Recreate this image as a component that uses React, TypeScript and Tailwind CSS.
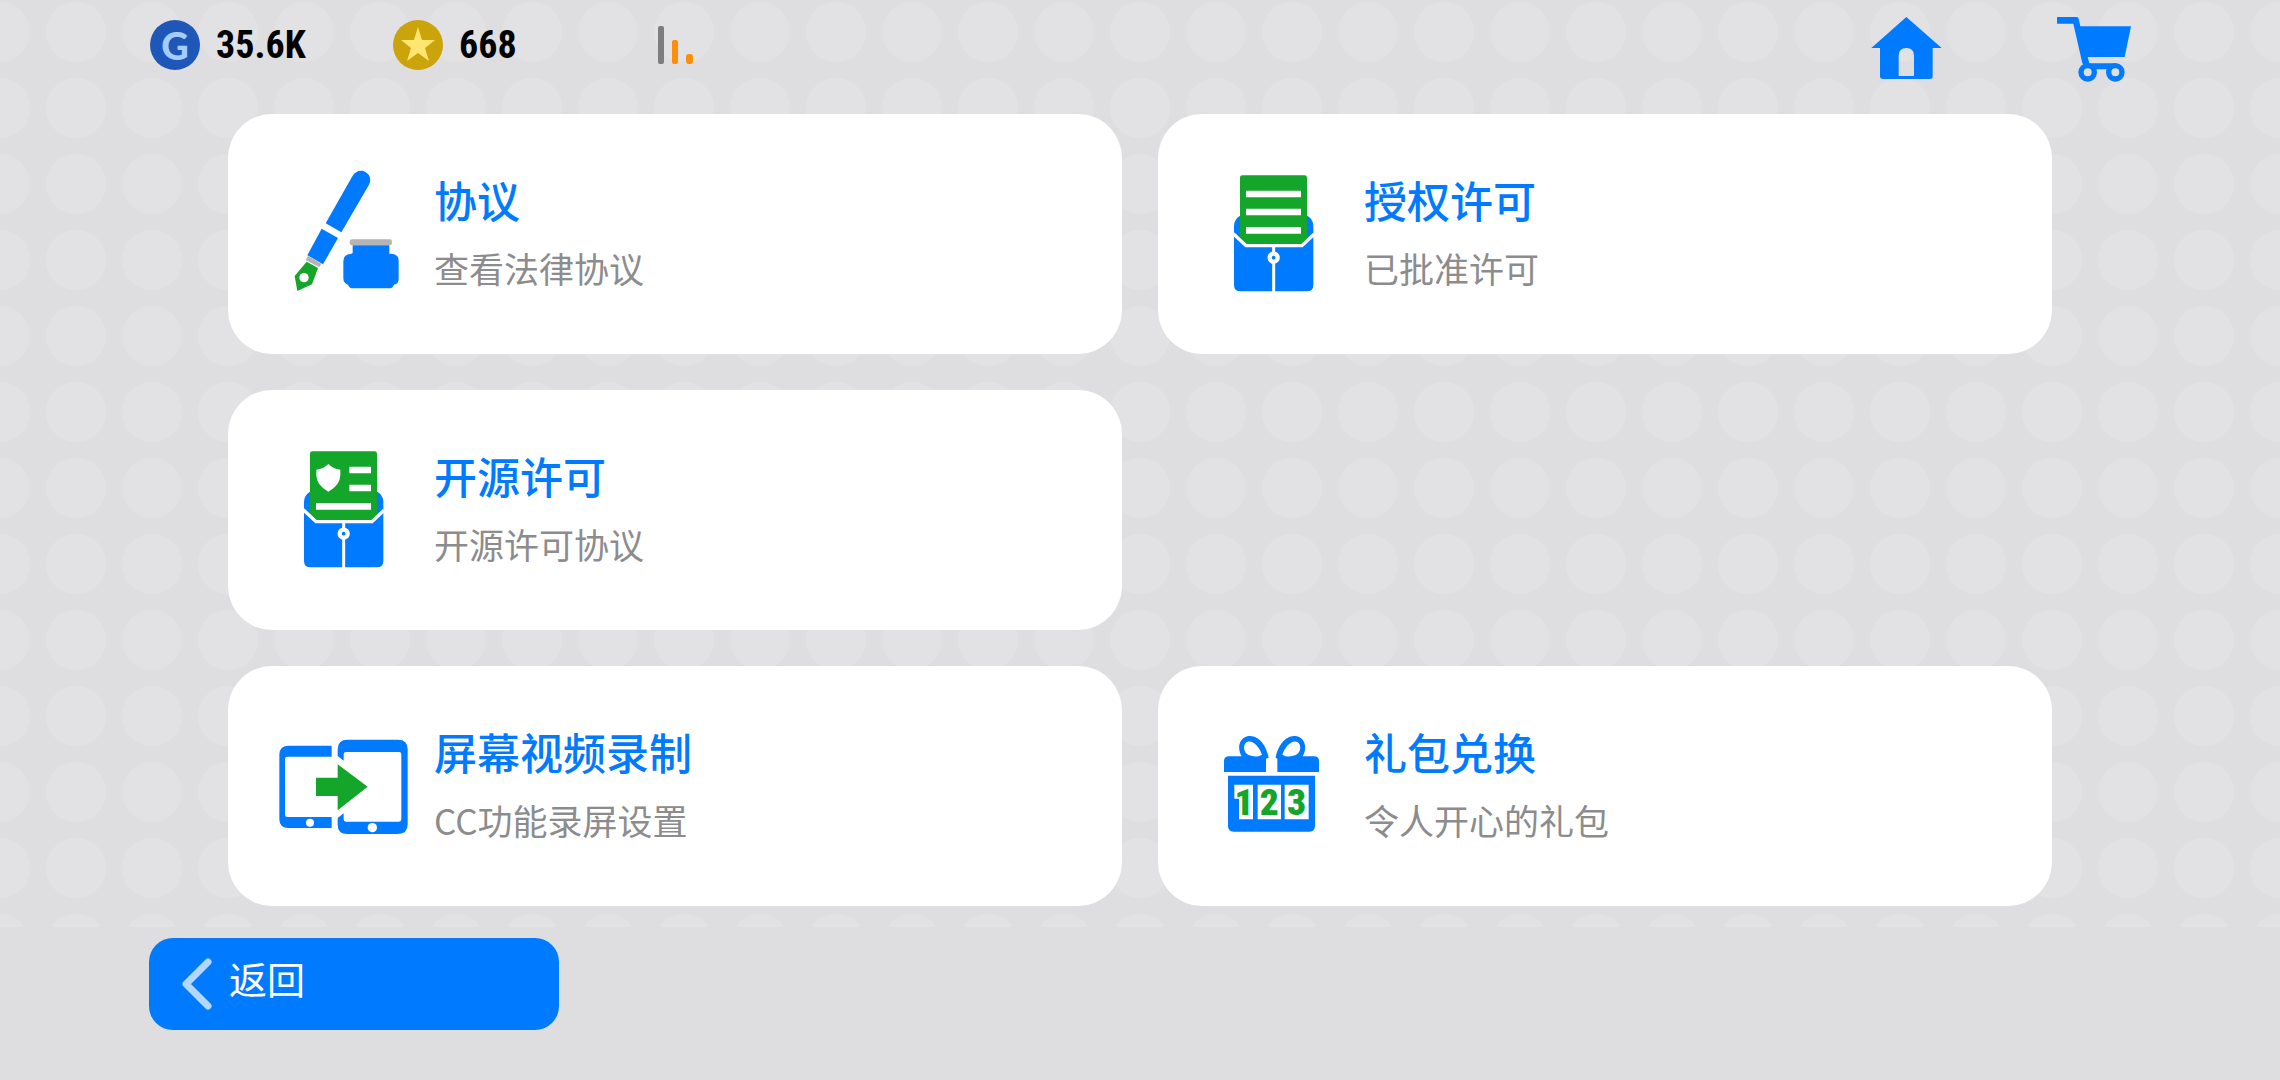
import type { ReactNode } from "react";

const BLUE = "#007bff";
const GREEN = "#14a52b";

function PenIcon() {
  return (
    <svg viewBox="156 156 432 432" className="size-36 shrink-0" aria-hidden="true">
      <path d="M317 340 L397 199 C404 186 417 180 430 183 C448 189 456 206 447 224 L364 367 Z" fill={BLUE} />
      <path d="M305 356 L354 384 L309 463 L262 436 Z" fill={BLUE} />
      <path d="M264 438 L304 461 L298 472 L257 450 Z" fill="#b5b5b5" />
      <path d="M260 455 L294 474 L276 523 L232 543 L224 498 Z" fill={GREEN} />
      <circle cx="252" cy="503" r="14" fill="#fff" />
      <rect x="389" y="388" width="127" height="18" rx="7" fill="#b5b5b5" />
      <path d="M398 406 H508 V431 H514 Q536 433 536 452 V507 Q536 522 522 524 Q518 535 508 535 H398 Q388 535 384 524 Q370 520 370 505 V454 Q370 433 392 432 L398 429 Z" fill={BLUE} />
    </svg>
  );
}

function EnvelopeIcon({ children }: { children: ReactNode }) {
  return (
    <svg viewBox="156 156 432 432" className="size-36 shrink-0" aria-hidden="true">
      <path d="M270 317 Q252 328 252 348 V524 Q252 544 272 544 H470 Q490 544 490 524 V348 Q490 328 472 317 Z" fill={BLUE} />
      <path d="M278 196 H464 Q471 196 471 203 V388 L456 404 H288 L270 387 V203 Q270 196 278 196 Z" fill={GREEN} />
      <path d="M250 371 L288 407 H456 L492 373" fill="none" stroke="#fff" strokeWidth="10" />
      <path d="M371 407 V546" stroke="#fff" strokeWidth="9" />
      <circle cx="371" cy="443" r="12" fill={BLUE} stroke="#fff" strokeWidth="13" />
      {children}
    </svg>
  );
}

function LicenseIcon() {
  return (
    <EnvelopeIcon>
      <path d="M288 252 H453 M288 306 H453 M288 361 H453" stroke="#fff" strokeWidth="20" />
    </EnvelopeIcon>
  );
}

function OpenSourceIcon() {
  return (
    <EnvelopeIcon>
      <path d="M325 234 Q340 249 361 251 V268 Q360 299 325 317 Q290 299 289 268 V251 Q310 249 325 234 Z" fill="#fff" />
      <path d="M388 252 H453 M388 306 H453 M288 361 H453" stroke="#fff" strokeWidth="20" />
    </EnvelopeIcon>
  );
}

function RecordIcon() {
  return (
    <svg viewBox="156 162 432 432" className="size-36 shrink-0" aria-hidden="true">
      <path d="M335 257 H206 Q178 257 178 284 V478 Q178 504 206 504 H335 V471 H202 Q195 471 195 464 V297 Q195 290 202 290 H335 Z" fill={BLUE} />
      <circle cx="270" cy="488" r="12" fill="#fff" />
      <path d="M371 302 L353 288 V268 Q353 239 382 239 H534 Q563 239 563 268 V493 Q563 522 534 522 H382 Q353 522 353 494 V474 L371 460 V478 Q371 485 378 485 H537 Q544 485 544 478 V283 Q544 276 537 276 H378 Q371 276 371 283 Z" fill={BLUE} />
      <circle cx="457" cy="503" r="14" fill="#fff" />
      <path d="M288 353 H353 V313 L443 380 L353 451 V408 H288 Z" fill={GREEN} />
    </svg>
  );
}

function GiftIcon() {
  return (
    <svg viewBox="156 162 432 432" className="size-36 shrink-0" aria-hidden="true">
      <path
        fillRule="evenodd"
        fill={BLUE}
        d="M222 336 V303 Q222 289 237 289 H275 C263 270 263 238 292 229 C325 222 350 258 356 293 L348 296 V336 Z M298 286 C279 279 277 250 293 245 C311 240 330 264 336 284 C325 291 310 291 298 286 Z"
      />
      <path
        fillRule="evenodd"
        fill={BLUE}
        d="M507 336 V303 Q507 289 492 289 H458 C470 270 470 238 441 229 C408 222 383 258 377 293 L382 296 V336 Z M435 286 C454 279 456 250 440 245 C422 240 403 264 397 284 C408 291 423 291 435 286 Z"
      />
      <path d="M234 347 H495 V498 Q495 515 478 515 H251 Q234 515 234 498 Z" fill={BLUE} />
      <path d="M253 374 H309 V478 H267 V416 H253 Z M323 374 H393 V478 H323 Z M404 374 H476 V478 H404 Z" fill="#fff" />
      <g
        fill={GREEN}
        textAnchor="middle"
        fontSize="112"
        fontWeight="900"
        fontFamily="'Roboto Condensed', Roboto, sans-serif"
      >
        <text x="282" y="466">1</text>
        <text x="358" y="466">2</text>
        <text x="440" y="466">3</text>
      </g>
    </svg>
  );
}

function HomeIcon() {
  return (
    <svg viewBox="93 48 213 192" className="h-16 w-[71px]" aria-hidden="true">
      <path
        fillRule="evenodd"
        fill={BLUE}
        d="M199 51 L305 144 H278 V229 Q278 237 269 237 H129 Q120 237 120 229 V144 H94 Z M176 228 H222 V167 Q222 144 199 144 Q176 144 176 167 Z"
      />
    </svg>
  );
}

function CartIcon() {
  return (
    <svg viewBox="648 48 228 201" className="h-[67px] w-[76px]" aria-hidden="true">
      <path d="M651 51 H710 Q715 51 716 56 L721 79 H873 L854 171 H743 L748 190 H826 V208 H744 L727 190 L700 71 H651 Z" fill={BLUE} />
      <circle cx="743" cy="217" r="20" fill="#dfdfe1" stroke={BLUE} strokeWidth="16" />
      <circle cx="826" cy="217" r="20" fill="#dfdfe1" stroke={BLUE} strokeWidth="16" />
    </svg>
  );
}

function StarBadge() {
  return (
    <svg viewBox="0 0 50 50" className="size-[50px]" aria-hidden="true">
      <circle cx="25" cy="25" r="25" fill="#cba30b" />
      <path d="M25 7 L29 20 H42 L32 28 L36 41 L25 33 L14 41 L18 28 L8 20 H21 Z" fill="#ffe670" />
    </svg>
  );
}

function SignalIcon() {
  return (
    <svg viewBox="0 0 36 38" className="h-[38px] w-9" role="img" aria-label="信号">
      <rect x="0" y="0" width="6" height="38" rx="2" fill="#7d7d7d" />
      <rect x="14" y="14" width="6" height="24" rx="2" fill="#ff8c0a" />
      <rect x="28" y="28" width="7" height="10" rx="3" fill="#ff8c0a" />
    </svg>
  );
}

type Entry = { title: string; note: string; icon: ReactNode; place?: string };

const entries: Entry[] = [
  { title: "协议", note: "查看法律协议", icon: <PenIcon /> },
  { title: "授权许可", note: "已批准许可", icon: <LicenseIcon /> },
  { title: "开源许可", note: "开源许可协议", icon: <OpenSourceIcon /> },
  { title: "屏幕视频录制", note: "CC功能录屏设置", icon: <RecordIcon />, place: "col-start-1" },
  { title: "礼包兑换", note: "令人开心的礼包", icon: <GiftIcon /> },
];

function Card({ title, note, icon, place = "" }: Entry) {
  return (
    <button type="button" className={`flex items-center gap-[18px] rounded-[44px] bg-white py-12 pl-11 pr-6 text-left ${place}`}>
      {icon}
      <span className="flex flex-col">
        <span className="text-[43px] font-medium leading-[68px] text-[#007bff]">{title}</span>
        <span className="text-[35px] leading-[70px] text-[#8c8c8e]">{note}</span>
      </span>
    </button>
  );
}

export default function App() {
  return (
    <div className="min-h-screen bg-[#dedee0] font-['Noto_Sans_CJK_SC',sans-serif]">
      <div className="bg-[radial-gradient(circle,#e2e2e4_29px,transparent_31px)] bg-[size:76px_76px] bg-[position:38px_-6px] pb-[21px]">
        <header className="flex h-[114px] items-start justify-between pl-[150px] pr-[148px]">
          <div className="flex h-[90px] items-center font-['Roboto_Condensed','Roboto',sans-serif] text-[38px] font-bold leading-none text-black">
            <div className="flex w-[243px] items-center gap-4">
              <span className="flex size-[50px] items-center justify-center rounded-full bg-[#1f57b8] font-['Lato',sans-serif] text-[38px] font-black text-[#a3ccff]">
                G
              </span>
              <span>35.6K</span>
            </div>
            <div className="flex w-[265px] items-center gap-4">
              <StarBadge />
              <span>668</span>
            </div>
            <SignalIcon />
          </div>
          <nav className="flex items-start gap-[114px] pt-4">
            <button type="button" aria-label="主页">
              <HomeIcon />
            </button>
            <button type="button" aria-label="商店">
              <CartIcon />
            </button>
          </nav>
        </header>
        <main className="grid grid-cols-2 gap-9 px-[10%]">
          {entries.map((entry) => (
            <Card key={entry.title} {...entry} />
          ))}
        </main>
      </div>
      <footer className="px-[149px] pt-[11px]">
        <button type="button" className="flex h-[92px] w-[410px] items-center gap-4 rounded-3xl bg-[#007bff] pl-8 text-white">
          <svg viewBox="0 0 32 52" className="h-[52px] w-8" aria-hidden="true">
            <path d="M27 4 L5 26 L27 48" fill="none" stroke="#b3d7ff" strokeWidth="7" strokeLinecap="round" strokeLinejoin="round" />
          </svg>
          <span className="pb-3 text-[38px] leading-none">返回</span>
        </button>
      </footer>
    </div>
  );
}
